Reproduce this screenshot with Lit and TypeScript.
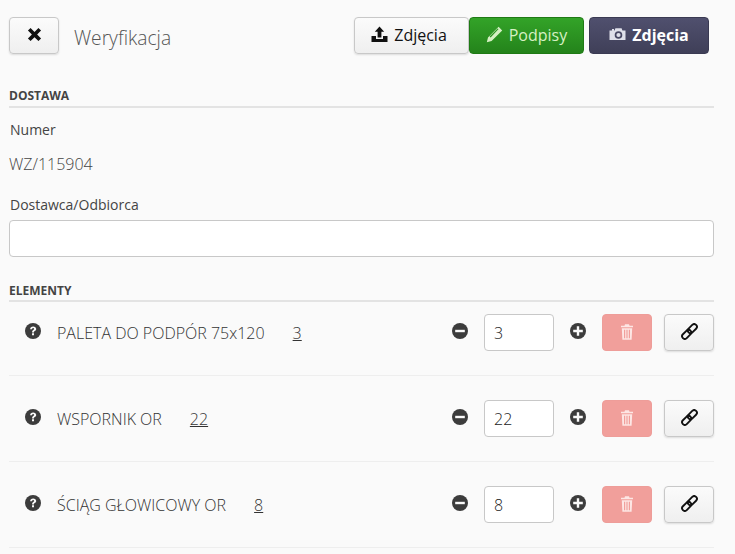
import { LitElement, html, css, svg } from "lit";
import { customElement } from "lit/decorators.js";

const icon = (cls: string, vb: string, body: unknown) =>
  html`<svg class=${cls} viewBox=${vb} aria-hidden="true">${body}</svg>`;

const X = () => icon("ic-x", "0 0 16 16", svg`<path d="M1 3.8 3.8 1 8 5.2 12.2 1 15 3.8 10.8 8 15 12.2 12.2 15 8 10.8 3.8 15 1 12.2 5.2 8z" fill="currentColor"/>`);
const Upload = () => icon("ic", "0 0 17 17", svg`<path d="M8.5 0.5 13.2 5.8H10.4V11.5H6.6V5.8H3.8zM0.5 10H5V13H12V10H16.5V16H0.5z" fill="currentColor"/>`);
const Pencil = () => icon("ic", "0 0 17 17", svg`<path d="M12.6 0.8 16.2 4.4 5.6 15 0.8 16.2 2 11.4zM12.6 3 11.6 2.6 3.6 10.6 4.6 11.4z" fill="currentColor" fill-rule="evenodd"/>`);
const Camera = () => icon("ic", "0 0 17 17", svg`<path d="M0.5 4.5H3V3H5V4.5H5.6L6.4 2.2H12.6L13.4 4.5H16.5V14H0.5zM9.5 5.2A3.8 3.8 0 1 0 9.5 12.8 3.8 3.8 0 1 0 9.5 5.2zM9.5 6.9A2.1 2.1 0 1 1 9.5 11.1 2.1 2.1 0 1 1 9.5 6.9z" fill="currentColor" fill-rule="evenodd"/>`);
const Question = () => icon("ic-circle", "0 0 16 16", svg`<circle cx="8" cy="8" r="8" fill="currentColor"/><path d="M5.1 6.2C5.2 4.4 6.4 3.4 8.2 3.4c1.7 0 3 1 3 2.5 0 1.2-.7 1.7-1.4 2.2-.6.4-.8.6-.8 1.3H7.1c0-1.3.3-1.8 1.1-2.4.6-.4.9-.7.9-1.1 0-.5-.4-.8-1-.8-.6 0-1 .4-1.1 1.1zM7 10.3h2v2H7z" fill="#fafafa"/>`);
const Minus = () => icon("ic-circle", "0 0 16 16", svg`<circle cx="8" cy="8" r="8" fill="currentColor"/><rect x="3.2" y="6.8" width="9.6" height="2.4" fill="#fafafa"/>`);
const Plus = () => icon("ic-circle", "0 0 16 16", svg`<circle cx="8" cy="8" r="8" fill="currentColor"/><path d="M6.8 3.2h2.4v3.6h3.6v2.4H9.2v3.6H6.8V9.2H3.2V6.8h3.6z" fill="#fafafa"/>`);
const Trash = () => icon("ic-trash", "0 0 12 16", svg`<path d="M4 0.3h4l.5 1.4H12v1.6H0V1.7h3.5zM0.8 4.3h10.4l-.6 11.4H1.4zM3 5.8v8.4h1.2V5.8zM5.4 5.8v8.4h1.2V5.8zM7.8 5.8v8.4H9V5.8z" fill="currentColor" fill-rule="evenodd"/>`);
const Link = () => icon("ic-link", "0 0 17 17", svg`<g fill="none" stroke="currentColor" stroke-width="1.9" transform="rotate(-45 8.5 8.5)"><rect x="-0.8" y="5.8" width="10.6" height="5.4" rx="2.7"/><rect x="7.2" y="5.8" width="10.6" height="5.4" rx="2.7"/></g>`);

const items = [
  { name: "PALETA DO PODPÓR 75x120", qty: "3" },
  { name: "WSPORNIK OR", qty: "22" },
  { name: "ŚCIĄG GŁOWICOWY OR", qty: "8" },
];

@customElement("app-root")
export class AppRoot extends LitElement {
  static styles = css`
    :host {
      display: block;
      box-sizing: border-box;
      width: 735px;
      height: 554px;
      overflow: hidden;
      background: #fafafa;
      padding: 17px 21px 0 9px;
      font-family: "Open Sans", sans-serif;
      color: #444;
    }
    svg { display: block; flex: none; }
    .header { display: flex; align-items: center; height: 37px; }
    .title {
      margin-left: 15px;
      font-size: 19.2px;
      font-weight: 300;
      color: #555;
      line-height: 37px;
      padding-top: 4px;
    }
    .actions { margin-left: auto; margin-right: 5px; display: flex; }
    .btn {
      box-sizing: border-box;
      height: 37px;
      display: flex;
      align-items: center;
      justify-content: center;
      gap: 6px;
      padding: 0 0 2px;
      border-radius: 4px;
      font-size: 16px;
      font-family: inherit;
    }
    .btn-default {
      border: 1px solid #c8c8c8;
      background: linear-gradient(#fbfbfb, #efefef);
      color: #111;
      box-shadow: 0 1px 2px rgba(0, 0, 0, 0.12);
    }
    .close { width: 50px; padding-bottom: 3px; }
    .upload { width: 115px; padding-right: 5px; }
    .green {
      width: 115px;
      border: 1px solid #1f7a15;
      background: linear-gradient(#33a328, #24831b);
      color: #d6f0c4;
    }
    .dark {
      width: 120px;
      margin-left: 5px;
      border: 1px solid #3a3a52;
      background: linear-gradient(#50506e, #3f3f58);
      color: #fff;
      font-weight: 700;
    }
    .ic { width: 17px; height: 17px; }
    .ic-link { width: 17px; height: 17px; }
    .ic-x { width: 15px; height: 15px; }
    .ic-circle { width: 16px; height: 16px; color: #3c3c3c; }
    .ic-trash { width: 12px; height: 16px; }
    .dark .ic { color: #dfe0ea; }
    .section-head {
      font-size: 12px;
      font-weight: 700;
      line-height: 16px;
      color: #444;
      border-bottom: 2px solid #e3e3e3;
      text-transform: uppercase;
    }
    .s1 { margin-top: 34px; padding-bottom: 2px; }
    .s2 { margin-top: 26px; padding-bottom: 1px; }
    .label { font-size: 14px; line-height: 20px; margin-left: 1px; color: #444; }
    .l1 { margin-top: 12px; }
    .l2 { margin-top: 21px; }
    .value { margin-top: 14px; font-size: 16px; font-weight: 300; line-height: 20px; color: #444; }
    .field {
      box-sizing: border-box;
      display: block;
      width: 100%;
      height: 37px;
      margin-top: 5px;
      border: 1px solid #c8c8c8;
      border-radius: 4px;
      background: #fff;
      font: inherit;
    }
    .row {
      display: flex;
      align-items: center;
      box-sizing: content-box;
      height: 37px;
      padding: 24px 0;
      border-bottom: 1px solid #eeeeee;
    }
    .row.first { padding-top: 12px; }
    .q { margin-left: 16px; position: relative; top: -2px; }
    .name { margin-left: 16px; font-size: 16px; font-weight: 300; color: #333; white-space: nowrap; }
    .qty { margin-left: 28px; font-size: 16px; font-weight: 300; color: #333; text-decoration: underline; }
    .controls { margin-left: auto; display: flex; align-items: center; }
    .controls .ic-circle { position: relative; top: -2px; }
    .num {
      box-sizing: border-box;
      width: 70px;
      height: 37px;
      margin: 0 16px;
      padding: 0 9px;
      border: 1px solid #c8c8c8;
      border-radius: 4px;
      background: #fff;
      font-family: inherit;
      font-size: 16px;
      font-weight: 300;
      color: #222;
    }
    .del {
      width: 50px;
      margin-left: 16px;
      border: 1px solid #ee9d99;
      background: #f19f9b;
      color: #fde6e4;
    }
    .lnk { width: 50px; margin-left: 12px; padding-bottom: 3px; }
  `;

  render() {
    return html`
      <div class="header">
        <button class="btn btn-default close">${X()}</button>
        <div class="title">Weryfikacja</div>
        <div class="actions">
          <button class="btn btn-default upload">${Upload()}<span>Zdjęcia</span></button>
          <button class="btn green">${Pencil()}<span>Podpisy</span></button>
          <button class="btn dark">${Camera()}<span>Zdjęcia</span></button>
        </div>
      </div>
      <div class="section-head s1">Dostawa</div>
      <div class="label l1">Numer</div>
      <div class="value">WZ/115904</div>
      <div class="label l2">Dostawca/Odbiorca</div>
      <input class="field" type="text" />
      <div class="section-head s2">Elementy</div>
      ${items.map(
        (it, i) => html`
          <div class="row ${i === 0 ? "first" : ""}">
            <span class="q">${Question()}</span>
            <span class="name">${it.name}</span>
            <span class="qty">${it.qty}</span>
            <div class="controls">
              ${Minus()}
              <input class="num" type="text" .value=${it.qty} />
              ${Plus()}
              <button class="btn del">${Trash()}</button>
              <button class="btn btn-default lnk">${Link()}</button>
            </div>
          </div>
        `
      )}
    `;
  }
}
